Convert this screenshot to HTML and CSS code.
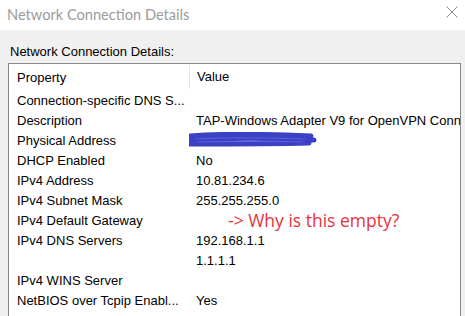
FILE: index.html
```html
<!DOCTYPE html>
<html lang="en">
<head>
  <meta charset="UTF-8">
  <title>Network Connection Details</title>
  <link rel="stylesheet" href="styles.css">
</head>
<body>
  <div class="window">
    <div class="title-bar">
      <span class="title">Network Connection Details</span>
      <svg class="close" width="12" height="12" viewBox="0 0 12 12">
        <path d="M0.5 0.5L11.5 11.5M11.5 0.5L0.5 11.5" stroke="#8a8a8a" stroke-width="1"/>
      </svg>
    </div>

    <div class="content">
      <div class="label">Network Connection Details:</div>
      <div class="list-box">
        <div class="list-header">
          <div class="col-prop">Property</div>
          <div class="col-value">Value</div>
        </div>
        <div class="row"><div class="col-prop">Connection-specific DNS S...</div><div class="col-value"></div></div>
        <div class="row"><div class="col-prop">Description</div><div class="col-value">TAP-Windows Adapter V9 for OpenVPN Connect</div></div>
        <div class="row">
          <div class="col-prop">Physical Address</div>
          <div class="col-value">
            <svg class="scribble" width="132" height="16" viewBox="0 0 132 16">
              <path d="M5 4 C30 2, 80 2, 126 4 M3 8 C40 6, 90 6, 129 8 M5 12 C40 12, 90 12, 124 11" stroke="#3b41c4" stroke-width="5" stroke-linecap="round" fill="none"/>
              <path d="M10 7 C40 5, 90 6, 120 7 M12 10 C50 9, 90 9, 118 10" stroke="#5a60d8" stroke-width="1" fill="none"/>
            </svg>
          </div>
        </div>
        <div class="row"><div class="col-prop">DHCP Enabled</div><div class="col-value">No</div></div>
        <div class="row"><div class="col-prop">IPv4 Address</div><div class="col-value">10.81.234.6</div></div>
        <div class="row"><div class="col-prop">IPv4 Subnet Mask</div><div class="col-value">255.255.255.0</div></div>
        <div class="row">
          <div class="col-prop">IPv4 Default Gateway</div>
          <div class="col-value"><span class="note">-&gt; Why is this empty?</span></div>
        </div>
        <div class="row"><div class="col-prop">IPv4 DNS Servers</div><div class="col-value">192.168.1.1</div></div>
        <div class="row"><div class="col-prop"></div><div class="col-value">1.1.1.1</div></div>
        <div class="row"><div class="col-prop">IPv4 WINS Server</div><div class="col-value"></div></div>
        <div class="row"><div class="col-prop">NetBIOS over Tcpip Enabl...</div><div class="col-value">Yes</div></div>
        <div class="row"><div class="col-prop">Link-local IPv6 Address</div><div class="col-value">fe80::11c0:af52:b60:6650%45</div></div>
      </div>
    </div>
  </div>
</body>
</html>
```

FILE: styles.css
```css
body {
  margin: 0;
  font-family: 'Liberation Sans', Arial, sans-serif;
  background-color: #f0f0f0;
  overflow: hidden;
}

.window {
  width: 465px;
  height: 316px;
  overflow: hidden;
}

.title-bar {
  height: 30px;
  background-color: #ffffff;
  display: flex;
  align-items: center;
  justify-content: space-between;
  padding: 0 6px 0 7px;
}

.title {
  font-family: Lato, sans-serif;
  font-size: 14.6px;
  color: #9b9b9b;
  margin-top: -2px;
}

.close {
  margin-top: -6px;
  margin-right: 1px;
}

.content {
  padding: 14px 4px 0 8px;
}

.label {
  font-size: 13px;
  color: #000000;
  padding-left: 2px;
  height: 19px;
}

.list-box {
  background-color: #ffffff;
  border: 1px solid #828790;
  border-bottom: none;
  height: 300px;
  font-size: 13px;
  color: #000000;
}

.list-header,
.row {
  display: flex;
  align-items: center;
  white-space: nowrap;
}

.list-header {
  height: 26px;
}

.row {
  height: 20px;
}

.col-prop {
  width: 172px;
  padding-left: 8px;
  overflow: hidden;
  flex-shrink: 0;
}

.col-value {
  padding-left: 7px;
  overflow: hidden;
  flex: 1;
}

.list-header .col-value {
  border-left: 1px solid #e5e5e5;
  height: 24px;
  line-height: 24px;
}

.scribble {
  display: block;
  margin-left: -11px;
}

.note {
  font-family: 'Open Sans', sans-serif;
  font-size: 17.5px;
  color: #e8323c;
  margin-left: 32px;
}
```
